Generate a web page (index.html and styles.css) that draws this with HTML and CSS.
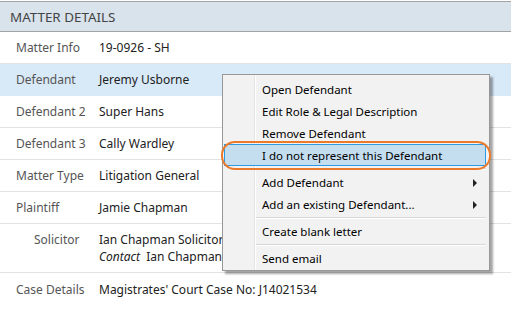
FILE: index.html
```html
<!DOCTYPE html>
<html lang="en">
  <head>
    <meta charset="UTF-8" />
    <meta name="viewport" content="width=device-width, initial-scale=1.0" />
    <title>Matter Details</title>
    <link rel="stylesheet" href="styles.css">
  </head>
  <body>
    <div class="panel">
      <div class="panel_head">MATTER DETAILS</div>
      <div class="row">
        <span class="label">Matter Info</span>
        <span class="value">19-0926 - SH</span>
      </div>
      <div class="row selected">
        <span class="label">Defendant</span>
        <span class="value">Jeremy Usborne</span>
      </div>
      <div class="row">
        <span class="label">Defendant 2</span>
        <span class="value">Super Hans</span>
      </div>
      <div class="row">
        <span class="label">Defendant 3</span>
        <span class="value">Cally Wardley</span>
      </div>
      <div class="row">
        <span class="label">Matter Type</span>
        <span class="value">Litigation General</span>
      </div>
      <div class="row">
        <span class="label">Plaintiff</span>
        <span class="value">Jamie Chapman</span>
      </div>
      <div class="row tall">
        <span class="label sub">Solicitor</span>
        <span class="value">
          Ian Chapman Solicitors<br />
          <em>Contact</em>&nbsp; Ian Chapman
        </span>
      </div>
      <div class="row last">
        <span class="label">Case Details</span>
        <span class="value">Magistrates' Court Case No: J14021534</span>
      </div>
    </div>

    <div class="menu">
      <div class="item">Open Defendant</div>
      <div class="item">Edit Role &amp; Legal Description</div>
      <div class="item">Remove Defendant</div>
      <div class="item active">I do not represent this Defendant</div>
      <div class="sep"></div>
      <div class="item more">Add Defendant</div>
      <div class="item more">Add an existing Defendant...</div>
      <div class="sep"></div>
      <div class="item">Create blank letter</div>
      <div class="sep"></div>
      <div class="item">Send email</div>
    </div>
  </body>
</html>
```

FILE: styles.css
```css
* {
  margin: 0;
  padding: 0;
  box-sizing: border-box;
}
body {
  font-family: "Noto Sans", "Open Sans", sans-serif;
  font-size: 12px;
  background-color: #fff;
  padding-top: 1px;
}

.panel {
  border-top: 1px solid #a3a3a3;
}
.panel_head {
  height: 30px;
  padding: 0 10px;
  display: flex;
  align-items: center;
  background-color: #d9e3ec;
  border-bottom: 1px solid #a3a3a3;
  color: #444;
  font-size: 13.4px;
}

.row {
  display: flex;
  align-items: center;
  height: 32px;
  border-bottom: 1px solid #e3e3e3;
  color: #222;
}
.row.selected {
  background-color: #d8e9f7;
  border-bottom-color: #d8e9f7;
}
.row.tall {
  height: 49px;
  align-items: flex-start;
  padding-top: 7px;
  line-height: 17px;
}
.row.last {
  border-bottom: none;
}
.label {
  width: 99px;
  padding-left: 16px;
  color: #555;
  flex-shrink: 0;
}
.label.sub {
  padding-left: 34px;
}
.value {
  white-space: nowrap;
}

.menu {
  position: absolute;
  left: 222px;
  top: 74px;
  width: 268px;
  height: 197px;
  padding: 3px 0 2px;
  border: 1px solid #979797;
  background: linear-gradient(
    to right,
    #f2f2f2 31px,
    #e2e3e3 31px,
    #e2e3e3 32px,
    #fff 32px,
    #fff 33px,
    #f2f2f2 33px
  );
  box-shadow: 3px 3px 2px rgba(0, 0, 0, 0.35);
  color: #000;
  font-size: 11.5px;
}
.item {
  position: relative;
  height: 22px;
  margin: 0 3px 0 1px;
  padding-left: 37px;
  display: flex;
  align-items: center;
  border: 1px solid transparent;
}
.item.active {
  background-color: #c4def0;
  border-color: #2b9ae0;
}
.item.active::after {
  content: "";
  position: absolute;
  top: -4px;
  right: -6px;
  bottom: -5px;
  left: -4px;
  border: 2px solid #ec7a2c;
  border-radius: 14px;
}
.item.more::before {
  content: "";
  position: absolute;
  right: 8px;
  top: 7px;
  border-left: 4px solid #222;
  border-top: 4px solid transparent;
  border-bottom: 4px solid transparent;
}
.sep {
  height: 5px;
  margin-left: 33px;
  margin-right: 3px;
  display: flex;
  align-items: center;
}
.sep::after {
  content: "";
  flex: 1;
  height: 1px;
  background-color: #d7d7d7;
  border-bottom: 1px solid #fff;
}
```
